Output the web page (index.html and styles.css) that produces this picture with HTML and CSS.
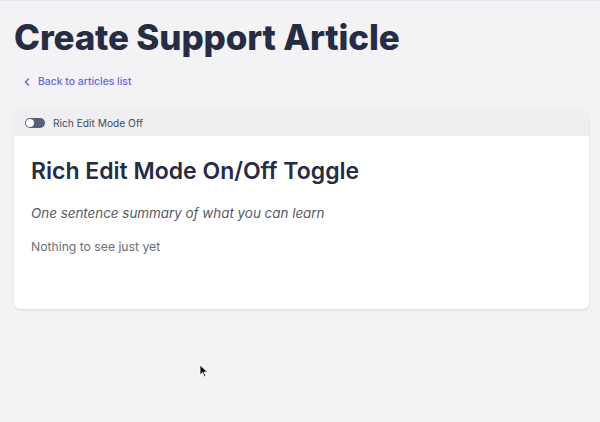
FILE: index.html
```html
<!DOCTYPE html>
<html lang="en">
<head>
    <meta charset="UTF-8">
    <meta name="viewport" content="width=device-width, initial-scale=1.0">
    <title>Create Support Article</title>
    <link rel="stylesheet" href="styles.css">
</head>
<body>
    <!-- page header -->
    <div class="page">
        <h1 class="page-title">Create Support Article</h1>
        <a class="back-link" href="#">
            <svg width="8" height="8" viewBox="0 0 8 8"><path d="M5.5 1 L2.5 4 L5.5 7" fill="none" stroke="#6b63e0" stroke-width="1.5" stroke-linecap="round" stroke-linejoin="round"/></svg>
            <span>Back to articles list</span>
        </a>
        <!-- editor card -->
        <div class="card">
            <div class="card-bar">
                <span class="toggle"><span class="knob"></span></span>
                <span class="toggle-label">Rich Edit Mode Off</span>
            </div>
            <div class="card-body">
                <h2 class="article-title">Rich Edit Mode On/Off Toggle</h2>
                <p class="summary">One sentence summary of what you can learn</p>
                <p class="empty">Nothing to see just yet</p>
            </div>
        </div>
    </div>
    <!-- mouse pointer -->
    <svg class="cursor" width="10" height="14" viewBox="0 0 10 14"><path d="M1 1 L1 11 L3.5 8.5 L5.5 13 L7 12.3 L5 8 L8.5 8 Z" fill="#111" stroke="#fff" stroke-width="0.8"/></svg>
</body>
</html>
```

FILE: styles.css
```css
*{
    margin: 0;
    padding: 0;
}
body{
    background-color: #f3f3f5;
    font-family: Inter, "Open Sans", sans-serif;
    border-top: 1px solid #e6e6ea;
    height: 421px;
    position: relative;
    overflow: hidden;
}
.page{
    padding: 13px 11px 0 14px;
}
.page-title{
    font-size: 35px;
    font-weight: 800;
    color: #262c44;
    line-height: 46px;
    letter-spacing: -0.15px;
}
.back-link{
    display: flex;
    align-items: center;
    gap: 7px;
    margin: 15px 0 0 9px;
    text-decoration: none;
    color: #6b63e0;
    font-size: 10.4px;
    font-weight: 500;
}
.card{
    margin-top: 21px;
    background-color: #ffffff;
    border-radius: 6px;
    box-shadow: 0 1px 2px rgba(0,0,0,0.12);
    overflow: hidden;
}
.card-bar{
    display: flex;
    align-items: center;
    gap: 8px;
    height: 27px;
    padding-left: 11px;
    background-color: #efeff1;
}
.toggle{
    width: 20px;
    height: 10px;
    border-radius: 5px;
    background-color: #585f76;
    position: relative;
}
.knob{
    position: absolute;
    left: 1px;
    top: 1px;
    width: 8px;
    height: 8px;
    border-radius: 50%;
    background-color: #ffffff;
}
.toggle-label{
    font-size: 10.2px;
    color: #444a5a;
}
.card-body{
    padding: 20px 17px 0 17px;
    height: 173px;
    box-sizing: border-box;
}
.article-title{
    font-size: 23px;
    font-weight: 600;
    color: #262c44;
    line-height: 30px;
}
.summary{
    margin-top: 19px;
    font-size: 13.4px;
    font-style: italic;
    color: #555a66;
}
.empty{
    margin-top: 18px;
    font-size: 12.2px;
    color: #6a6e78;
}
.cursor{
    position: absolute;
    left: 199px;
    top: 363px;
}
```
